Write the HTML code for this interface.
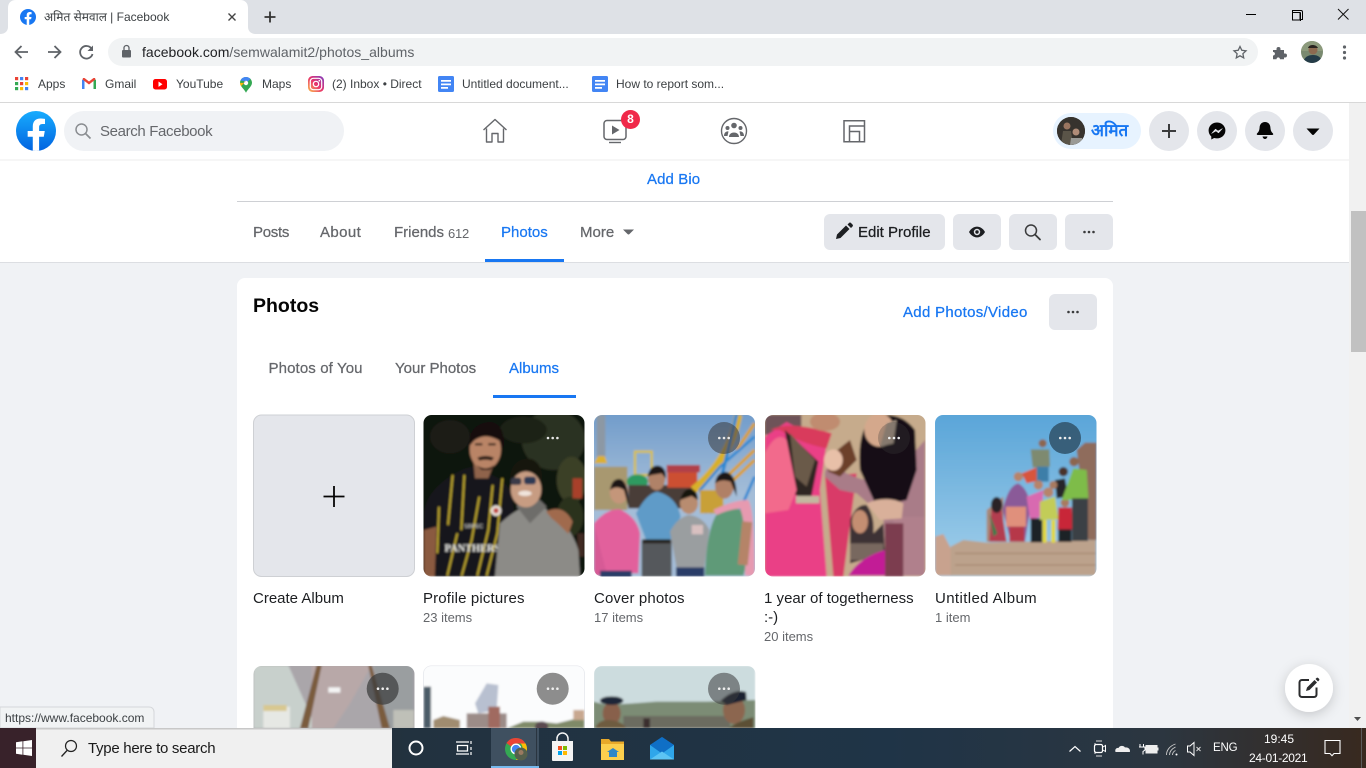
<!DOCTYPE html>
<html><head><meta charset="utf-8"><title>Facebook</title>
<style>
html,body{margin:0;padding:0;width:1366px;height:768px;overflow:hidden;background:#f0f2f5}
body{position:relative;font-family:"Liberation Sans","Noto Sans CJK SC",sans-serif}
svg.main{position:absolute;left:0;top:0}
.t{position:absolute;white-space:nowrap;line-height:20px;height:20px}
.m{-webkit-text-stroke:.25px currentColor}
.g{color:#65676b}.b{color:#1877f2}.k{color:#1c1e21}
</style></head><body>
<svg class="main" width="1366" height="768" viewBox="0 0 1366 768" xmlns="http://www.w3.org/2000/svg">
<defs>
<filter id="bl" x="-5%" y="-5%" width="110%" height="110%"><feGaussianBlur stdDeviation="1"/></filter>
<filter id="sh" x="-40%" y="-40%" width="180%" height="180%"><feDropShadow dx="0" dy="3" stdDeviation="6" flood-color="#000" flood-opacity=".18"/></filter>
<linearGradient id="fb" x1="0" y1="0" x2="0" y2="1"><stop offset="0" stop-color="#18acfe"/><stop offset="1" stop-color="#0163e0"/></linearGradient>
<linearGradient id="ig" x1="0" y1="1" x2="1" y2="0"><stop offset="0" stop-color="#fdc14a"/><stop offset=".5" stop-color="#e8336d"/><stop offset="1" stop-color="#7b3fc4"/></linearGradient>
<linearGradient id="tb" x1="0" y1="0" x2="1" y2="0"><stop offset="0" stop-color="#3c2126"/><stop offset=".3" stop-color="#22323f"/><stop offset=".65" stop-color="#1f3447"/><stop offset=".85" stop-color="#2c3640"/><stop offset="1" stop-color="#38291f"/></linearGradient>
<linearGradient id="s2" x1="0" y1="0" x2="0" y2="1"><stop offset="0" stop-color="#6f9bca"/><stop offset=".5" stop-color="#a4bdd8"/></linearGradient>
<linearGradient id="s4" x1="0" y1="0" x2="0" y2="1"><stop offset="0" stop-color="#58a4d8"/><stop offset="1" stop-color="#a4d0ea"/></linearGradient>
<clipPath id="c1"><rect x="423.500" y="415" width="161" height="161.500" rx="8"/></clipPath>
<clipPath id="c2"><rect x="594" y="415" width="161" height="161.500" rx="8"/></clipPath>
<clipPath id="c3"><rect x="765" y="415" width="160.500" height="161.500" rx="8"/></clipPath>
<clipPath id="c4"><rect x="935" y="415" width="161.500" height="161.500" rx="8"/></clipPath>
<clipPath id="c5"><rect x="253.500" y="666" width="161" height="100" rx="8"/></clipPath>
<clipPath id="c6"><rect x="423.500" y="666" width="161" height="100" rx="8"/></clipPath>
<clipPath id="c7"><rect x="594" y="666" width="161.500" height="100" rx="8"/></clipPath>
<clipPath id="av1"><circle cx="1071" cy="131" r="14"/></clipPath>
<clipPath id="av2"><circle cx="1312" cy="52" r="11"/></clipPath>
<clipPath id="fbc"><circle cx="36" cy="131" r="20"/></clipPath>
</defs>

<!-- page surfaces -->
<rect x="0" y="159" width="1349" height="103" fill="#fff"/>
<rect x="0" y="262" width="1349" height="1" fill="#dcdee2"/>
<rect x="237" y="201" width="876" height="1" fill="#ced0d4"/>
<rect x="237" y="278" width="876" height="500" rx="8" fill="#fff"/>
<rect x="485" y="259" width="79" height="3" fill="#1877f2"/>
<rect x="493" y="395" width="83" height="3" fill="#1877f2"/>

<!-- profile buttons -->
<rect x="824" y="214" width="121" height="36" rx="6" fill="#e4e6eb"/>
<rect x="953" y="214" width="48" height="36" rx="6" fill="#e4e6eb"/>
<rect x="1009" y="214" width="48" height="36" rx="6" fill="#e4e6eb"/>
<rect x="1065" y="214" width="48" height="36" rx="6" fill="#e4e6eb"/>
<rect x="1049" y="294" width="48" height="36" rx="6" fill="#e4e6eb"/>
<path d="M836 239l1-4.500 9-9 3.500 3.500-9 9zM847.500 224.500l1.500-1.500c.6-.6 1.400-.6 2 0l1.500 1.500c.6.6.6 1.400 0 2l-1.500 1.500z" fill="#1c1e21"/>
<path d="M969 232c2-3.600 5-5.400 8-5.400s6 1.800 8 5.400c-2 3.600-5 5.400-8 5.400s-6-1.800-8-5.400z" fill="#1c1e21"/><circle cx="977" cy="232" r="3.200" fill="#e4e6eb"/><circle cx="977" cy="232" r="1.700" fill="#1c1e21"/>
<circle cx="1031" cy="230.500" r="5.500" fill="none" stroke="#3a3b3c" stroke-width="1.500"/><path d="M1035 234.500l5 5" stroke="#3a3b3c" stroke-width="1.800" stroke-linecap="round"/>
<g fill="#3a3b3c"><circle cx="1084.500" cy="232" r="1.300"/><circle cx="1089" cy="232" r="1.300"/><circle cx="1093.500" cy="232" r="1.300"/><circle cx="1068.500" cy="312" r="1.300"/><circle cx="1073" cy="312" r="1.300"/><circle cx="1077.500" cy="312" r="1.300"/></g>
<path d="M623 229.500h11l-4.500 4.500c-.6.600-1.400.600-2 0z" fill="#65676b"/>

<!-- create album -->
<rect x="253.500" y="415" width="161" height="161.500" rx="8" fill="#e4e6eb" stroke="#ced0d4"/>
<path d="M334 486v21M323.500 496.500h21" stroke="#050505" stroke-width="1.800"/>

<!-- Photo 1 -->
<g clip-path="url(#c1)"><g filter="url(#bl)"><g transform="translate(420 410) scale(.33333)">
<rect x="0" y="0" width="500" height="500" fill="#11120e"/>
<ellipse cx="400" cy="90" rx="95" ry="90" fill="#2a3320"/><ellipse cx="310" cy="60" rx="70" ry="40" fill="#1b2316"/><ellipse cx="455" cy="210" rx="45" ry="70" fill="#3a3f28"/><ellipse cx="450" cy="320" rx="40" ry="60" fill="#2b301f"/><ellipse cx="90" cy="80" rx="60" ry="50" fill="#1a1a14"/><rect x="458" y="205" width="28" height="60" fill="#a8402c"/><rect x="472" y="370" width="20" height="70" fill="#3f2a20"/>
<path d="M12 310Q20 230 130 178L165 168 235 205Q275 225 282 300L225 500 40 500 12 420Z" fill="#17171a"/>
<path d="M12 360L50 350 44 500 12 500Z" fill="#8a5a40"/>
<g stroke="#cbb233" stroke-width="5" fill="none"><path d="M98 195L84 345"/><path d="M133 195L124 360"/><path d="M218 225L205 360 172 497"/><path d="M178 260L155 390 125 497"/><path d="M247 205L232 370 200 497"/><path d="M57 290L52 430"/><path d="M112 370L82 497"/></g>
<text x="74" y="424" font-family="Liberation Serif,serif" font-weight="bold" font-size="31" fill="#e6e6e2">PANTHERS</text>
<text x="132" y="354" font-family="Liberation Sans,sans-serif" font-size="17" fill="#d8d8d4">SBPEC</text>
<circle cx="228" cy="302" r="16" fill="#e8e0d8"/><circle cx="228" cy="302" r="8" fill="#c0403a"/>
<path d="M160 150L165 205 205 205 222 160Z" fill="#8f634c"/>
<ellipse cx="196" cy="118" rx="47" ry="60" fill="#b98466"/>
<path d="M148 108Q146 42 210 36Q258 42 250 118L238 92Q195 66 162 92Z" fill="#17100e"/>
<path d="M172 143Q197 132 222 143L215 152Q197 146 178 152Z" fill="#2c1a14"/><path d="M170 165Q197 185 222 165L210 180 185 180Z" fill="#2c1a14"/>
<rect x="165" y="100" width="22" height="6" fill="#2c1a14"/><rect x="205" y="100" width="22" height="6" fill="#2c1a14"/>
<path d="M225 497L240 340Q290 295 330 285 370 280 385 305 450 340 475 420L480 500 225 500Z" fill="#8c8b87"/>
<path d="M290 290L330 340 380 290 360 270 300 270Z" fill="#6e6d6a"/>
<path d="M378 305Q430 280 458 335L445 372Q420 345 395 325Z" fill="#a06a4e"/>
<ellipse cx="318" cy="238" rx="46" ry="54" fill="#c79c82"/>
<path d="M270 205Q275 148 325 146 368 150 366 215L352 190Q315 170 285 192Z" fill="#181210"/>
<rect x="272" y="203" width="32" height="22" rx="8" fill="#3a3a48"/><rect x="312" y="200" width="36" height="23" rx="8" fill="#2f3a55"/>
<ellipse cx="315" cy="250" rx="20" ry="8" fill="#f0e4dc"/>
</g></g>
<g fill="#e8e8e8"><circle cx="548" cy="438" r="1.300"/><circle cx="552.700" cy="438" r="1.300"/><circle cx="557.400" cy="438" r="1.300"/></g></g>

<!-- Photo 2 -->
<g clip-path="url(#c2)"><g filter="url(#bl)"><g transform="translate(420 410) scale(.33333)">
<rect x="500" y="0" width="520" height="500" fill="url(#s2)"/>
<path d="M530 14h26v140h-26z" fill="#8c98a4"/>
<path d="M522 160h40l-8-22h-20z" fill="#dcb030"/><rect x="522" y="170" width="100" height="130" fill="#a89870"/>
<rect x="645" y="125" width="50" height="70" fill="none" stroke="#d8c040" stroke-width="7"/>
<ellipse cx="652" cy="215" rx="32" ry="22" fill="#2e9a60"/>
<rect x="625" y="225" width="200" height="70" fill="#4a3c38"/>
<rect x="742" y="185" width="90" height="48" fill="#cc4f30"/><rect x="740" y="165" width="100" height="22" fill="#b0404a"/>
<path d="M955 14Q930 150 820 240" fill="none" stroke="#d8b02c" stroke-width="24"/>
<path d="M950 14L905 200 870 310" fill="none" stroke="#2a88d2" stroke-width="10"/>
<path d="M1004 40L950 120M1004 120L920 200M1004 150L940 210" stroke="#d8a030" stroke-width="10"/>
<path d="M1004 80L900 170 840 240 860 310M1004 200L960 300" fill="none" stroke="#2a88d2" stroke-width="8"/>
<rect x="840" y="240" width="70" height="70" fill="#c8a038"/>
<path d="M522 340Q560 295 600 298 650 320 660 370L655 490 535 487Z" fill="#e2609c"/>
<path d="M522 340L560 490 522 500Z" fill="#d75a96"/>
<ellipse cx="597" cy="245" rx="28" ry="36" fill="#c4967a"/><path d="M570 240Q575 205 600 207 628 215 625 290L612 240Q590 225 570 240Z" fill="#1c1614"/><rect x="540" y="482" width="95" height="20" fill="#2a3c68"/>
<path d="M648 310Q680 250 712 245 770 260 782 320L752 390 680 395Z" fill="#5f9bc8"/>
<rect x="665" y="390" width="90" height="110" fill="#55585c"/><rect x="668" y="388" width="84" height="12" fill="#28221e"/>
<ellipse cx="710" cy="205" rx="26" ry="36" fill="#b08268"/><path d="M682 200Q690 165 715 167 740 172 737 205L725 190 695 195Z" fill="#1c1614"/>
<path d="M750 365Q770 325 805 315 850 320 868 360L852 480 770 475Z" fill="#9a9ea0"/><rect x="815" y="345" width="34" height="28" fill="#d8c0c0"/><rect x="768" y="472" width="85" height="28" fill="#2a3c68"/>
<ellipse cx="807" cy="280" rx="27" ry="32" fill="#b88c70"/><path d="M780 270Q790 235 812 237 835 242 833 270L815 258Z" fill="#161210"/>
<path d="M855 497Q860 340 900 300 950 280 988 320 990 430 970 497Z" fill="#5f9a78"/>
<path d="M880 300Q940 270 985 270 1004 300 1004 497H975Q980 340 960 295 920 300 890 315Z" fill="#e69ab0"/>
<ellipse cx="913" cy="228" rx="28" ry="38" fill="#b08066"/><path d="M885 220Q890 185 920 186 950 195 950 260L932 215Q905 205 885 220Z" fill="#1d1513"/>
<rect x="960" y="335" width="30" height="130" fill="#b58468" transform="rotate(6 975 400)"/>
</g></g>
<circle cx="724" cy="438" r="16" fill="#3a3b3c" fill-opacity=".55"/><g fill="#e8e8e8"><circle cx="719.300" cy="438" r="1.300"/><circle cx="724" cy="438" r="1.300"/><circle cx="728.700" cy="438" r="1.300"/></g></g>

<!-- Photo 3 -->
<g clip-path="url(#c3)"><g filter="url(#bl)"><g transform="translate(760 410) scale(.33333)">
<rect x="0" y="0" width="510" height="500" fill="#c6ab8c"/>
<rect x="14" y="14" width="110" height="60" fill="#6e5258"/>
<path d="M14 80L80 36 200 100 180 240 200 500H14Z" fill="#ea3f86"/>
<path d="M30 60Q90 30 215 70L200 115Q120 100 60 60Z" fill="#d93a5c"/>
<path d="M75 60L175 155 150 280 100 250Z" fill="#2d2622"/>
<path d="M90 70L165 150 140 230 105 200Z" fill="#6b5a4a"/>
<rect x="108" y="258" width="70" height="22" fill="#c2b8a0"/>
<path d="M14 130Q50 60 80 90L110 240 85 300 14 310Z" fill="#f26a8c"/>
<ellipse cx="195" cy="35" rx="45" ry="28" fill="#c08c70"/>
<path d="M195 200L290 190 250 500H220Z" fill="#d93a68"/>
<path d="M195 200Q190 150 260 190 340 230 400 200L495 90V497H380L370 320 290 250 240 240Z" fill="#a97c88"/>
<rect x="400" y="320" width="95" height="177" fill="#b0808c"/><rect x="375" y="340" width="55" height="160" fill="#7c3e50"/>
<path d="M300 180Q290 60 340 20 420 0 465 60L470 180 440 270 350 290Z" fill="#141114"/>
<ellipse cx="358" cy="60" rx="45" ry="50" fill="#d4a88c"/><path d="M380 40L410 30 400 100 360 110Z" fill="#a69484"/>
<path d="M200 150Q230 120 270 90L290 150 240 200 205 185Z" fill="#6c3f2c"/>
<ellipse cx="220" cy="150" rx="28" ry="32" fill="#e8c0a8"/>
<path d="M320 280Q380 255 430 280L425 325 360 330Z" fill="#d9b09a"/>
<path d="M270 330Q290 280 320 285 345 320 340 370L370 340 375 430 270 460Z" fill="#3c3034"/>
<ellipse cx="300" cy="335" rx="24" ry="35" fill="#c48e72"/><rect x="270" y="400" width="100" height="50" fill="#78685e"/>
<path d="M265 497Q300 440 375 420V497Z" fill="#c21f96"/>
</g></g>
<circle cx="894" cy="438" r="16" fill="#3a3b3c" fill-opacity=".3"/><g fill="#eee"><circle cx="889.300" cy="438" r="1.300"/><circle cx="894" cy="438" r="1.300"/><circle cx="898.700" cy="438" r="1.300"/></g></g>

<!-- Photo 4 -->
<g clip-path="url(#c4)"><g filter="url(#bl)"><g transform="translate(760 410) scale(.33333)">
<rect x="520" y="0" width="500" height="500" fill="url(#s4)"/>
<path d="M950 120L975 98H1010V390H985Z" fill="#8f6c5c"/>
<path d="M680 395V300L730 260V395Z" fill="#a88878"/>
<path d="M525 380L550 372 575 420V497H525Z" fill="#c8a28e"/>
<path d="M572 410L610 390 680 398 1008 390V497H572Z" fill="#bca28c"/>
<g stroke="#a08068" stroke-width="3"><path d="M585 430H1008M585 465H1008"/></g>
<path d="M688 395L695 290 725 300 740 395Z" fill="#b33e50"/><ellipse cx="710" cy="285" rx="17" ry="24" fill="#2a2226"/><path d="M688 310L700 380 712 370Z" fill="#3e7a4e"/>
<path d="M728 300Q745 225 775 220 810 240 810 300L795 395H752Z" fill="#8a5a98"/><rect x="738" y="290" width="60" height="60" fill="#e0907c"/><rect x="748" y="350" width="45" height="45" fill="#b6384a"/>
<circle cx="775" cy="200" r="14" fill="#b6846a"/>
<path d="M785 190L835 170 845 210 800 220Z" fill="#d8553c"/><path d="M812 118L868 118 870 170 818 172Z" fill="#7e8a70"/><circle cx="848" cy="100" r="12" fill="#8c6650"/><rect x="830" y="170" width="36" height="45" fill="#3e7ea8"/>
<path d="M800 260L850 240 845 330 815 395H845V320L810 330Z" fill="#d86ab0"/><rect x="812" y="325" width="35" height="72" fill="#1e2028"/><circle cx="835" cy="225" r="14" fill="#b6846a"/>
<path d="M840 275L885 260 895 328 840 330Z" fill="#c2cc58"/><rect x="848" y="330" width="12" height="68" fill="#e2d838"/><rect x="874" y="330" width="12" height="68" fill="#e2d838"/><circle cx="865" cy="247" r="15" fill="#b6846a"/>
<path d="M895 292L935 292 938 360H893Z" fill="#c82838"/><rect x="895" y="358" width="40" height="38" fill="#1e2028"/><circle cx="915" cy="278" r="13" fill="#a87a60"/>
<path d="M885 210L915 205 925 260 890 265Z" fill="#26262a"/><circle cx="880" cy="225" r="12" fill="#a87a60"/><circle cx="910" cy="185" r="14" fill="#4a322c"/>
<path d="M905 270L940 175 980 180 985 265 935 270Z" fill="#7ebc48"/><rect x="936" y="265" width="48" height="128" fill="#3a4044"/><circle cx="942" cy="155" r="14" fill="#8c6650"/>
</g></g>
<circle cx="1065" cy="438" r="16" fill="#33566f" fill-opacity=".9"/><g fill="#eee"><circle cx="1060.300" cy="438" r="1.300"/><circle cx="1065" cy="438" r="1.300"/><circle cx="1069.700" cy="438" r="1.300"/></g></g>

<!-- Photo 5 -->
<g clip-path="url(#c5)"><g filter="url(#bl)"><g transform="translate(240 660) scale(.33333)">
<rect x="30" y="0" width="500" height="240" fill="#aaa6aa"/>
<path d="M40 16H145L230 205H40Z" fill="#c8d0cc"/>
<path d="M400 16H522V205H440Z" fill="#9a9ea0"/>
<path d="M215 16H395L330 130 280 205H215Z" fill="#b8a8a8"/>
<rect x="265" y="82" width="36" height="16" fill="#f4f4f4"/>
<path d="M230 16L180 205H205L245 16ZM395 16L450 205H425L385 16Z" fill="#7a5c3e"/>
<rect x="70" y="140" width="80" height="65" fill="#e6e8e4"/><rect x="70" y="135" width="70" height="18" fill="#d8c890"/>
<rect x="460" y="150" width="62" height="55" fill="#bfc0b8"/>
</g></g>
<circle cx="382.700" cy="688.700" r="16" fill="#3a3b3c" fill-opacity=".72"/><g fill="#eee"><circle cx="378" cy="688.700" r="1.300"/><circle cx="382.700" cy="688.700" r="1.300"/><circle cx="387.400" cy="688.700" r="1.300"/></g></g>

<!-- Photo 6 -->
<rect x="423.500" y="666" width="161" height="70" rx="8" fill="#fdfdfe" stroke="#e4e6eb"/>
<g clip-path="url(#c6)"><g filter="url(#bl)"><g transform="translate(240 660) scale(.33333)">
<rect x="551" y="16" width="482" height="190" fill="#fbfcfd"/>
<path d="M705 130L740 70 775 75 770 150 715 160Z" fill="#b8c0d0"/>
<rect x="680" y="160" width="120" height="45" fill="#9c8c88"/><rect x="745" y="140" width="35" height="65" fill="#a06a60"/>
<rect x="551" y="80" width="22" height="125" fill="#4c5c68"/>
<path d="M580 205V180L610 168 660 180V205Z" fill="#a08c70"/>
<path d="M800 205L850 185 900 185 950 190 1033 170V205Z" fill="#7f8a68"/>
<ellipse cx="905" cy="200" rx="20" ry="16" fill="#5a4a50"/>
<rect x="1000" y="150" width="33" height="30" fill="#c8a890"/>
</g></g>
<circle cx="552.700" cy="688.700" r="16" fill="#8d8d8d"/><g fill="#eee"><circle cx="548" cy="688.700" r="1.300"/><circle cx="552.700" cy="688.700" r="1.300"/><circle cx="557.400" cy="688.700" r="1.300"/></g></g>

<!-- Photo 7 -->
<g clip-path="url(#c7)"><g filter="url(#bl)"><g transform="translate(240 660) scale(.33333)">
<rect x="1060" y="16" width="486" height="190" fill="#ccdcde"/>
<path d="M1060 125L1100 135 1180 130 1250 125 1400 125 1546 120V205H1060Z" fill="#7c8c74"/>
<rect x="1150" y="168" width="320" height="37" fill="#6c6c60"/>
<ellipse cx="1115" cy="160" rx="27" ry="34" fill="#88604c"/><ellipse cx="1115" cy="122" rx="35" ry="13" fill="#1e2838"/><path d="M1065 205Q1075 178 1110 180 1150 185 1158 205Z" fill="#6e5c40"/>
<ellipse cx="1482" cy="150" rx="33" ry="42" fill="#8c6650"/><path d="M1442 122Q1480 85 1518 96L1520 120 1460 135Z" fill="#1e2430"/><path d="M1465 205Q1490 185 1540 172V205Z" fill="#5c5034"/>
<rect x="1210" y="175" width="20" height="30" fill="#3a2e2e"/>
</g></g>
<circle cx="724" cy="688.700" r="16" fill="#3a3b3c" fill-opacity=".55"/><g fill="#eee"><circle cx="719.300" cy="688.700" r="1.300"/><circle cx="724" cy="688.700" r="1.300"/><circle cx="728.700" cy="688.700" r="1.300"/></g></g>

<!-- FAB -->
<circle cx="1309" cy="688" r="24" fill="#fff" filter="url(#sh)"/>
<path d="M1309 680h-7c-1.500 0-2.500 1-2.500 2.500v12c0 1.500 1 2.500 2.500 2.500h12c1.500 0 2.500-1 2.500-2.500v-7" fill="none" stroke="#2b2c2e" stroke-width="2"/>
<path d="M1306 691l1-3.500 7.500-7.500 2.500 2.500-7.500 7.500z" fill="#2b2c2e"/><path d="M1315.500 679l1-1c.5-.5 1.200-.5 1.700 0l.8.8c.5.5.5 1.200 0 1.700l-1 1z" fill="#2b2c2e"/>

<!-- Scrollbar -->
<rect x="1349" y="103" width="17" height="625" fill="#f1f1f1"/>
<rect x="1351" y="211" width="15" height="141" fill="#c1c1c1"/>
<path d="M1354 114l3.500-3.500 3.500 3.500z" fill="#505050"/>
<path d="M1354 717l3.500 4 3.500-4z" fill="#505050"/>

<!-- FB header -->
<rect x="0" y="159" width="1349" height="2" fill="#f6f6f6"/>
<rect x="0" y="103" width="1366" height="56" fill="#fff"/>
<rect x="1349" y="103" width="17" height="56" fill="#f1f1f1"/>
<circle cx="36" cy="131" r="20" fill="url(#fb)"/>
<g clip-path="url(#fbc)"><path transform="translate(16 111) scale(1.111)" d="M25 23.200 25.900 18H20.800v-3.400c0-1.500.7-2.900 3-2.900h2.300V7.200s-2.100-.4-4.100-.4c-4.200 0-6.900 2.500-6.900 7.100V18h-4.600v5.200h4.600V37h5.700V23.200z" fill="#fff"/></g>
<rect x="64" y="111" width="280" height="40" rx="20" fill="#f0f2f5"/>
<circle cx="81.500" cy="129.500" r="5.500" fill="none" stroke="#8a8d91" stroke-width="1.500"/><path d="M85.500 133.500l5 5" stroke="#8a8d91" stroke-width="1.700"/>
<path d="M483.500 130L495 119.500 506.500 130M486.500 128.500V142H492V133.500H498V142H503.500V128.500" fill="none" stroke="#65676b" stroke-width="1.400" stroke-linejoin="round"/>
<rect x="604" y="120.500" width="22" height="19" rx="3" fill="none" stroke="#65676b" stroke-width="1.500"/><path d="M612 125.500l7.500 4.500-7.500 4.500z" fill="#65676b"/><path d="M609 142.500h12" stroke="#65676b" stroke-width="1.400"/>
<circle cx="630.500" cy="119.500" r="9.500" fill="#f02849"/>
<circle cx="734" cy="131" r="12.500" fill="none" stroke="#65676b" stroke-width="1.400"/><circle cx="734" cy="125.500" r="2.800" fill="#65676b"/><circle cx="727.500" cy="128" r="2" fill="#65676b"/><circle cx="740.500" cy="128" r="2" fill="#65676b"/><path d="M729 137c0-6 10-6 10 0zM724 136c0-4 3-5 4.500-4.500l-1 4.500zM744 136c0-4-3-5-4.500-4.500l1 4.500z" fill="#65676b"/>
<path d="M844 120.700h20.500v21h-20.500zM849.500 141.700V126h15M849.500 131.500H859.500V141.700" fill="none" stroke="#65676b" stroke-width="1.500"/>
<rect x="1053" y="113" width="88" height="36" rx="18" fill="#e7f3ff"/>
<circle cx="1071" cy="131" r="14" fill="#3d3a36"/>
<g clip-path="url(#av1)"><rect x="1057" y="117" width="28" height="28" fill="#37332e"/><circle cx="1067" cy="126" r="3.500" fill="#9a7560"/><path d="M1063 131h8l2 14h-12z" fill="#5a5448"/><circle cx="1076" cy="132" r="3.500" fill="#b08c78"/><path d="M1071 138h11l2 7h-14z" fill="#9a9a96"/></g>
<g fill="#e4e6eb"><circle cx="1169" cy="131" r="20"/><circle cx="1217" cy="131" r="20"/><circle cx="1265" cy="131" r="20"/><circle cx="1313" cy="131" r="20"/></g>
<path d="M1169 124v14M1162 131h14" stroke="#3a3b3c" stroke-width="2"/>
<path d="M1217 122.500c-4.700 0-8.400 3.500-8.400 8 0 2.400 1 4.500 2.700 6v3l2.800-1.500c.9.300 1.900.4 2.900.4 4.700 0 8.400-3.500 8.400-7.900s-3.700-8-8.400-8z" fill="#050505"/><path d="M1211.500 133.500l4-4.500 2.500 2 4.500-2.500-4 4.500-2.500-2z" fill="#e4e6eb" stroke="#e4e6eb" stroke-width=".5"/>
<path d="M1265 122c-3.500 0-5.200 2.600-5.400 5.500-.2 3-1 4.500-2.600 6-.6.800 0 1.500.8 1.500h14.400c.8 0 1.400-.7.800-1.500-1.600-1.500-2.400-3-2.600-6-.2-2.900-1.900-5.500-5.400-5.500z" fill="#050505"/><path d="M1262.500 136.500h5c-.4 1.800-1.400 2.500-2.500 2.500s-2.100-.7-2.500-2.500z" fill="#050505"/>
<path d="M1306.500 128.500h13l-5.500 6c-.6.600-1.400.600-2 0z" fill="#050505"/>

<!-- Chrome tabstrip -->
<rect x="0" y="0" width="1366" height="34" fill="#dee1e6"/>
<path d="M0 34H0C5 34 8 31 8 27V8C8 3 11 0 16 0H240C245 0 248 3 248 8V27C248 31 251 34 256 34Z" fill="#fff"/>
<circle cx="28" cy="17" r="8" fill="#1877f2"/><path transform="translate(20 9) scale(.444)" d="M25 23.200 25.900 18H20.800v-3.400c0-1.500.7-2.900 3-2.900h2.300V7.200s-2.100-.4-4.100-.4c-4.200 0-6.900 2.500-6.900 7.100V18h-4.600v5.200h4.600V36h5.700V23.200z" fill="#fff"/>
<path d="M228.500 13.500l7 7M235.500 13.500l-7 7" stroke="#444" stroke-width="1.400"/>
<path d="M270 11.500v11M264.500 17h11" stroke="#333" stroke-width="1.800"/>
<rect x="1246" y="14" width="10" height="1" fill="#000"/>
<path d="M1292.500 13h8v8M1292.500 13v-2.500h8.500c1 0 1.500.5 1.500 1.500v7.500H1300" fill="none" stroke="#000"/><rect x="1292.500" y="12.500" width="7.500" height="7.500" fill="#dee1e6" stroke="#000"/>
<path d="M1338 9l10.500 10.500M1348.500 9L1338 19.500" stroke="#111" stroke-width="1"/>

<!-- toolbar -->
<rect x="0" y="34" width="1366" height="68" fill="#fff"/>
<rect x="0" y="102" width="1366" height="1" fill="#d8d8d8"/>
<rect x="108" y="38" width="1150" height="28" rx="14" fill="#f1f3f4"/>
<path d="M28 52H16M21.500 46l-6 6 6 6" fill="none" stroke="#5f6368" stroke-width="1.800"/>
<path d="M48 52h12M54.500 46l6 6-6 6" fill="none" stroke="#5f6368" stroke-width="1.800"/>
<path d="M91.500 48.500A6.300 6.300 0 1 0 92.500 54" fill="none" stroke="#5f6368" stroke-width="1.800"/><path d="M93 45.500v5.500h-5.500z" fill="#5f6368"/>
<rect x="122" y="50" width="9" height="7.500" rx="1" fill="#5f6368"/><path d="M124 50v-2a2.500 2.500 0 0 1 5 0v2" fill="none" stroke="#5f6368" stroke-width="1.300"/>
<path d="M1240 46.500l1.800 3.800 4.200.5-3.100 2.900.8 4.200-3.700-2.100-3.700 2.100.8-4.200-3.100-2.900 4.200-.5z" fill="none" stroke="#5f6368" stroke-width="1.300"/>
<path d="M1273 50h3.500v-1a2 2 0 0 1 4 0v1h3.500v3.500h1a2 2 0 0 1 0 4h-1v1.800h-4c0-2.600-3.500-2.600-3.500 0h-3.500v-3.800c2.600 0 2.600-3.500 0-3.500z" fill="#5f6368"/>
<circle cx="1312" cy="52" r="11" fill="#7a8a70"/>
<g clip-path="url(#av2)"><rect x="1301" y="41" width="22" height="10" fill="#8c9a7c"/><circle cx="1313" cy="50" r="4.500" fill="#8c6a50"/><path d="M1303 63c1-6 5-8 10-8s8 2 10 8z" fill="#243c48"/><path d="M1308 48c1-4 8-4 10 0z" fill="#2a2420"/></g>
<g fill="#5f6368"><circle cx="1344.500" cy="47" r="1.600"/><circle cx="1344.500" cy="52.500" r="1.600"/><circle cx="1344.500" cy="58" r="1.600"/></g>

<!-- bookmarks -->
<g>
<rect x="15" y="77" width="3.200" height="3.200" fill="#ea4335"/><rect x="20" y="77" width="3.200" height="3.200" fill="#4285f4"/><rect x="25" y="77" width="3.200" height="3.200" fill="#ea4335"/>
<rect x="15" y="82" width="3.200" height="3.200" fill="#34a853"/><rect x="20" y="82" width="3.200" height="3.200" fill="#ea4335"/><rect x="25" y="82" width="3.200" height="3.200" fill="#fbbc05"/>
<rect x="15" y="87" width="3.200" height="3.200" fill="#34a853"/><rect x="20" y="87" width="3.200" height="3.200" fill="#fbbc05"/><rect x="25" y="87" width="3.200" height="3.200" fill="#4285f4"/>
</g>
<path d="M82 89V80l2.500-1.500V89z" fill="#4285f4"/><path d="M93.500 89V78.500L96 80v9z" fill="#34a853"/><path d="M82.500 79.500L89 84.500l6.500-5-.5-1.500-1.500 0L89 81.500 84.500 78 83 78z" fill="#ea4335"/>
<rect x="153" y="79" width="14" height="10.500" rx="2.500" fill="#f00"/><path d="M158.500 81.500l4 2.700-4 2.700z" fill="#fff"/>
<path d="M246 77c-3.300 0-6 2.500-6 5.800 0 3.800 4.500 6.500 6 10 1.500-3.500 6-6.200 6-10 0-3.300-2.700-5.800-6-5.800z" fill="#34a853"/><path d="M240.500 80.500c1-2.200 3-3.500 5.500-3.500 1.700 0 3.300.7 4.400 1.900l-2.700 2.700z" fill="#4285f4"/><path d="M240 82.800c0 1.200.5 2.300 1.100 3.300l3-3z" fill="#fbbc05"/><circle cx="246" cy="83" r="2.200" fill="#fff"/><path d="M241 86l5-5-1 .5z" fill="#ea4335"/>
<rect x="308" y="76" width="16" height="16" rx="4.500" fill="url(#ig)"/><rect x="310.300" y="78.300" width="11.400" height="11.400" rx="3" fill="none" stroke="#fff" stroke-width="1.200"/><circle cx="316" cy="84" r="2.700" fill="none" stroke="#fff" stroke-width="1.200"/><circle cx="319.300" cy="80.700" r=".8" fill="#fff"/>
<g><rect x="438" y="76" width="16" height="16" rx="1.500" fill="#4285f4"/><path d="M441 80h10v1.800h-10zM441 83.500h10v1.800h-10zM441 87h7v1.800h-7z" fill="#fff"/></g>
<g><rect x="592" y="76" width="16" height="16" rx="1.500" fill="#4285f4"/><path d="M595 80h10v1.800h-10zM595 83.500h10v1.800h-10zM595 87h7v1.800h-7z" fill="#fff"/></g>

<!-- status bubble -->
<path d="M0 707H149c3 0 5 2 5 5v16H0z" fill="#f1f3f4" stroke="#d5d7da"/>

<!-- taskbar -->
<rect x="0" y="728" width="1366" height="40" fill="url(#tb)"/>
<rect x="0" y="728" width="36" height="40" fill="#38222a"/>
<path d="M16 742.200l6.500-.9v6.300H16zM23.300 741.200l8.700-1.200v7.600h-8.700zM16 748.400h6.500v6.300l-6.500-.9zM23.300 748.400H32v7.600l-8.700-1.200z" fill="#fff"/>
<rect x="36" y="728" width="356" height="40" fill="#f0f0f0"/>
<rect x="36" y="728" width="356" height="1.500" fill="#c8c8c8"/>
<circle cx="71" cy="746" r="5.500" fill="none" stroke="#222" stroke-width="1.200"/><path d="M67 750.500l-5.500 6" stroke="#222" stroke-width="1.300"/>
<circle cx="416" cy="748" r="6.500" fill="none" stroke="#fff" stroke-width="2"/>
<path d="M456 742h13M456 754h13M457.500 745.500h10v5.500h-10z" fill="none" stroke="#fff" stroke-width="1.300"/><path d="M471 741v3M471 747v3M471 752v3" stroke="#fff" stroke-width="1.200"/>
<rect x="491" y="728" width="48" height="40" fill="#3f5060"/>
<rect x="491" y="766" width="48" height="2" fill="#76b9ed"/>
<rect x="536" y="728" width="1" height="38" fill="#2a3540"/>
<circle cx="516" cy="749" r="11" fill="#34a853"/><path d="M516 738a11 11 0 0 1 9.500 5.500H516a5.500 5.500 0 0 0-5 3l-4.500-3.500A11 11 0 0 1 516 738z" fill="#ea4335"/><path d="M525.500 743.500A11 11 0 0 1 516 760l4.500-8a5.500 5.500 0 0 0 0-8.500z" fill="#fbbc05"/><circle cx="516" cy="749" r="4.800" fill="#4285f4" stroke="#fff" stroke-width="1.300"/>
<circle cx="521" cy="754" r="6.500" fill="#55604c"/><circle cx="521" cy="752.500" r="2.500" fill="#9a7a60"/>
<path d="M552 741h21v19c0 .6-.4 1-1 1h-19c-.6 0-1-.4-1-1z" fill="#f4f4f4"/><path d="M557 741v-2.500a5.500 5.500 0 0 1 11 0V741" fill="none" stroke="#f4f4f4" stroke-width="1.500"/>
<rect x="558" y="746" width="4" height="4" fill="#f25022"/><rect x="563" y="746" width="4" height="4" fill="#7fba00"/><rect x="558" y="751" width="4" height="4" fill="#00a4ef"/><rect x="563" y="751" width="4" height="4" fill="#ffb900"/>
<path d="M601 739h8l2 2.500h13V760h-23z" fill="#e8a92a"/><rect x="601" y="744" width="23" height="16" fill="#fccf4d"/><rect x="609" y="752" width="8" height="5" fill="#2f87c8"/><path d="M607 752l6-4 6 4z" fill="#2f87c8"/>
<path d="M650 745l12-8 12 8v14h-24z" fill="#0a6cc0"/><path d="M650 745h24v14.500h-24z" fill="#2fa6ea"/><path d="M650 745l12 8.500 12-8.500-12-8z" fill="#0f6fc6"/><path d="M650 759.500l12-8 12 8z" fill="#5cc4f4"/>
<path d="M1069.500 751.500l5.500-5 5.500 5" fill="none" stroke="#fff" stroke-width="1.200"/>
<path d="M1096 741h6M1096 756h6M1095 743v3M1095 751v3" stroke="#ddd"/><rect x="1094.500" y="744.500" width="8" height="8" rx="1.500" fill="none" stroke="#fff" stroke-width="1.200"/><path d="M1103 747l2.500-1.500v6l-2.500-1.500" fill="none" stroke="#fff"/>
<path d="M1115.500 752c-1-3 1.500-4.500 3-4 1-2.500 5-3 6.500-.5 2.500-.5 5 1 5 3.500 0 .5 0 1-.5 1z" fill="#eee"/>
<path d="M1140 744v3M1143.500 744v3M1139 747h6v3l-2 1.500v3" fill="none" stroke="#fff"/><rect x="1146" y="745.500" width="11" height="7.500" fill="#eee" stroke="#eee"/><path d="M1157.500 747.500h1v3h-1z" fill="#eee"/>
<path d="M1166.500 755c0-4.500 3-9 9-11M1169.500 755c0-3.200 2-6 6-8M1172.500 755c0-1.800 1-3.500 3-4.500" fill="none" stroke="#ccc" stroke-width=".9"/><circle cx="1176.500" cy="754.500" r="1" fill="#fff"/>
<path d="M1187.500 746h2.500l4-3.500v13l-4-3.500h-2.500z" fill="none" stroke="#fff"/><path d="M1196.500 747l4 4M1200.500 747l-4 4" stroke="#ddd"/>
<path d="M1325 740.500h15v13h-6l-2 2.200-2-2.200h-5z" fill="none" stroke="#fff" stroke-width="1.100"/>
<rect x="1361" y="728" width="1" height="40" fill="#5a5a5a"/>
</svg>

<!-- Chrome text -->
<div class="t" style="left:44px;top:7px;font-size:12px;color:#3c4043">अमित सेमवाल | Facebook</div>
<div class="t" style="left:142px;top:42px;font-size:14px;letter-spacing:.02px;color:#202124">facebook.com<span style="color:#5f6368">/semwalamit2/photos_albums</span></div>
<div class="t" style="left:38px;top:74px;font-size:12px;color:#3c4043">Apps</div>
<div class="t" style="left:105px;top:74px;font-size:12px;color:#3c4043">Gmail</div>
<div class="t" style="left:176px;top:74px;font-size:12px;color:#3c4043">YouTube</div>
<div class="t" style="left:262px;top:74px;font-size:12px;color:#3c4043">Maps</div>
<div class="t" style="left:332px;top:74px;font-size:12px;color:#3c4043">(2) Inbox • Direct</div>
<div class="t" style="left:462px;top:74px;font-size:12px;color:#3c4043">Untitled document...</div>
<div class="t" style="left:616px;top:74px;font-size:12px;color:#3c4043">How to report som...</div>

<!-- FB header text -->
<div class="t g" style="left:100px;top:122px;font-size:15px;letter-spacing:-.35px">Search Facebook</div>
<div class="t" style="left:625.500px;top:109px;font-size:12px;font-weight:bold;color:#fff;width:10px;text-align:center">8</div>
<div class="t b" style="left:1091px;top:121px;font-size:17px;font-weight:bold">अमित</div>

<!-- Profile nav -->
<div class="t b m" style="left:647px;top:170px;font-size:15px;letter-spacing:.1px">Add Bio</div>
<div class="t g m" style="left:253px;top:223px;font-size:15px;letter-spacing:-.3px">Posts</div>
<div class="t g m" style="left:320px;top:223px;font-size:15px;letter-spacing:.4px">About</div>
<div class="t g m" style="left:394px;top:223px;font-size:15px">Friends</div>
<div class="t g" style="left:448px;top:224px;font-size:13px;letter-spacing:-.2px">612</div>
<div class="t b m" style="left:501px;top:223px;font-size:15px">Photos</div>
<div class="t g m" style="left:580px;top:223px;font-size:15px">More</div>
<div class="t k m" style="left:858px;top:223px;font-size:15px">Edit Profile</div>

<!-- Card -->
<div class="t k" style="left:253px;top:296px;font-size:19.500px;font-weight:bold;color:#050505">Photos</div>
<div class="t b m" style="left:903px;top:303px;font-size:15px;letter-spacing:.3px">Add Photos/Video</div>
<div class="t g m" style="left:268.500px;top:359px;font-size:15px;letter-spacing:.12px">Photos of You</div>
<div class="t g m" style="left:395px;top:359px;font-size:15px">Your Photos</div>
<div class="t b m" style="left:509px;top:359px;font-size:15px">Albums</div>

<div class="t k" style="left:253px;top:589px;font-size:15px">Create Album</div>
<div class="t k" style="left:423px;top:589px;font-size:15px;letter-spacing:.15px">Profile pictures</div>
<div class="t g" style="left:423px;top:608px;font-size:13px">23 items</div>
<div class="t k" style="left:594px;top:589px;font-size:15px;letter-spacing:.12px">Cover photos</div>
<div class="t g" style="left:594px;top:608px;font-size:13px">17 items</div>
<div class="t k" style="left:764px;top:589px;font-size:15px;letter-spacing:.02px">1 year of togetherness</div>
<div class="t k" style="left:764px;top:608px;font-size:15px">:-)</div>
<div class="t g" style="left:764px;top:627px;font-size:13px">20 items</div>
<div class="t k" style="left:935px;top:589px;font-size:15px;letter-spacing:.38px">Untitled Album</div>
<div class="t g" style="left:935px;top:608px;font-size:13px">1 item</div>

<!-- status / taskbar text -->
<div class="t" style="left:5px;top:708px;font-size:12px;color:#3c4043">https://www.facebook.com</div>
<div class="t" style="left:88px;top:739px;font-size:15px;letter-spacing:-.28px;color:#1a1a1a">Type here to search</div>
<div class="t" style="left:1213px;top:738px;font-size:11.500px;letter-spacing:-.2px;color:#fff">ENG</div>
<div class="t" style="left:1264px;top:729px;font-size:12px;color:#fff">19:45</div>
<div class="t" style="left:1249px;top:748px;font-size:12px;letter-spacing:-.3px;color:#fff">24-01-2021</div>
</body></html>
